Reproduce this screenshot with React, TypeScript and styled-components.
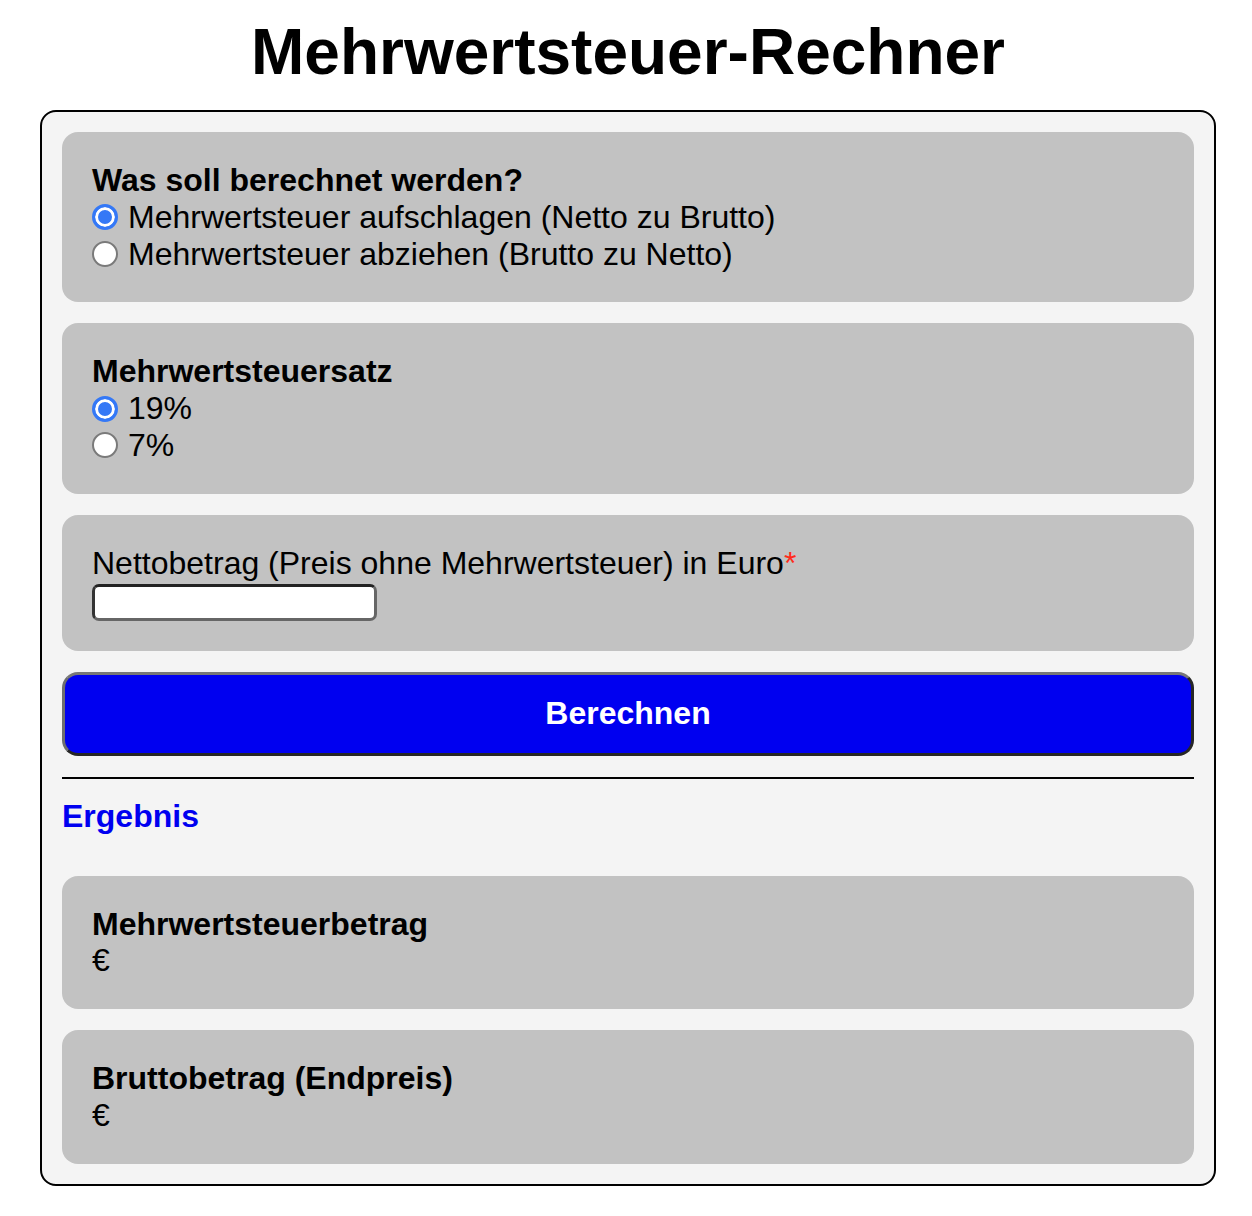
import React, { useState } from "react";
import styled, { createGlobalStyle } from "styled-components";

const Global = createGlobalStyle`
  html, body { margin: 0; padding: 0; background: #ffffff; }
  body { font-family: "Liberation Sans", Arial, sans-serif; color: #000; }
`;

const Page = styled.main`
  padding: 15px 36px 30px 40px;
`;

const Title = styled.h1`
  margin: 0 0 21px;
  font-size: 64px;
  line-height: 74px;
  font-weight: 700;
  text-align: center;
`;

const Frame = styled.form`
  background: #f4f4f4;
  border: 2px solid #000;
  border-radius: 16px;
  padding: 20px;
  display: flex;
  flex-direction: column;
  gap: 21px;
`;

const Card = styled.fieldset`
  margin: 0;
  border: 0;
  background: #c2c2c2;
  border-radius: 16px;
  padding: 30px;
  display: flex;
  flex-direction: column;
  font-size: 32px;
  line-height: 1.15;
  min-width: 0;
`;

const CardTitle = styled.legend<{ $bold?: boolean }>`
  float: left;
  padding: 0;
  font-weight: ${(p) => (p.$bold ? 700 : 400)};
`;

const Option = styled.label`
  display: flex;
  align-items: center;
  gap: 10px;
  cursor: pointer;
`;

const Radio = styled.input.attrs({ type: "radio" })`
  appearance: none;
  margin: 0;
  width: 26px;
  height: 26px;
  border-radius: 50%;
  border: 2px solid #7a7a7a;
  background: #fff;
  flex: none;
  &:checked {
    border: 3px solid #3478f6;
    background: #3478f6;
    box-shadow: inset 0 0 0 3px #fff;
  }
`;

const Required = styled.span`
  color: #ff2a1a;
`;

const TextInput = styled.input`
  display: block;
  box-sizing: border-box;
  width: 285px;
  height: 37px;
  margin: 2px 0 0;
  background: #fff;
  border: 3px solid #666;
  border-top-color: #222;
  border-left-color: #333;
  border-radius: 7px;
  font-size: 24px;
  font-family: inherit;
`;

const Submit = styled.button`
  height: 84px;
  flex: none;
  background: #0000f0;
  color: #fff;
  font-family: "Liberation Sans", Arial, sans-serif;
  font-size: 32px;
  font-weight: 700;
  border: 3px solid #262626;
  border-top-color: #777;
  border-left-color: #6e6e6e;
  border-radius: 16px;
  cursor: pointer;
`;

const Divider = styled.hr`
  margin: 0;
  border: 0;
  border-top: 2px solid #000;
`;

const ResultHeading = styled.h3`
  margin: -2px 0 20px;
  color: #0000f0;
  font-size: 32px;
  line-height: 37px;
  font-weight: 700;
`;

const Value = styled.div``;

export default function App() {
  const [mode, setMode] = useState("auf");
  const [rate, setRate] = useState("19");
  return (
    <Page>
      <Global />
      <Title>Mehrwertsteuer-Rechner</Title>
      <Frame onSubmit={(e) => e.preventDefault()}>
        <Card>
          <CardTitle $bold>Was soll berechnet werden?</CardTitle>
          <Option>
            <Radio name="mode" checked={mode === "auf"} onChange={() => setMode("auf")} />
            Mehrwertsteuer aufschlagen (Netto zu Brutto)
          </Option>
          <Option>
            <Radio name="mode" checked={mode === "ab"} onChange={() => setMode("ab")} />
            Mehrwertsteuer abziehen (Brutto zu Netto)
          </Option>
        </Card>
        <Card>
          <CardTitle $bold>Mehrwertsteuersatz</CardTitle>
          <Option>
            <Radio name="rate" checked={rate === "19"} onChange={() => setRate("19")} />
            19%
          </Option>
          <Option>
            <Radio name="rate" checked={rate === "7"} onChange={() => setRate("7")} />
            7%
          </Option>
        </Card>
        <Card>
          <CardTitle>
            Nettobetrag (Preis ohne Mehrwertsteuer) in Euro<Required>*</Required>
          </CardTitle>
          <TextInput type="text" />
        </Card>
        <Submit type="submit">Berechnen</Submit>
        <Divider />
        <ResultHeading>Ergebnis</ResultHeading>
        <Card>
          <CardTitle $bold>Mehrwertsteuerbetrag</CardTitle>
          <Value>€</Value>
        </Card>
        <Card>
          <CardTitle $bold>Bruttobetrag (Endpreis)</CardTitle>
          <Value>€</Value>
        </Card>
      </Frame>
    </Page>
  );
}
